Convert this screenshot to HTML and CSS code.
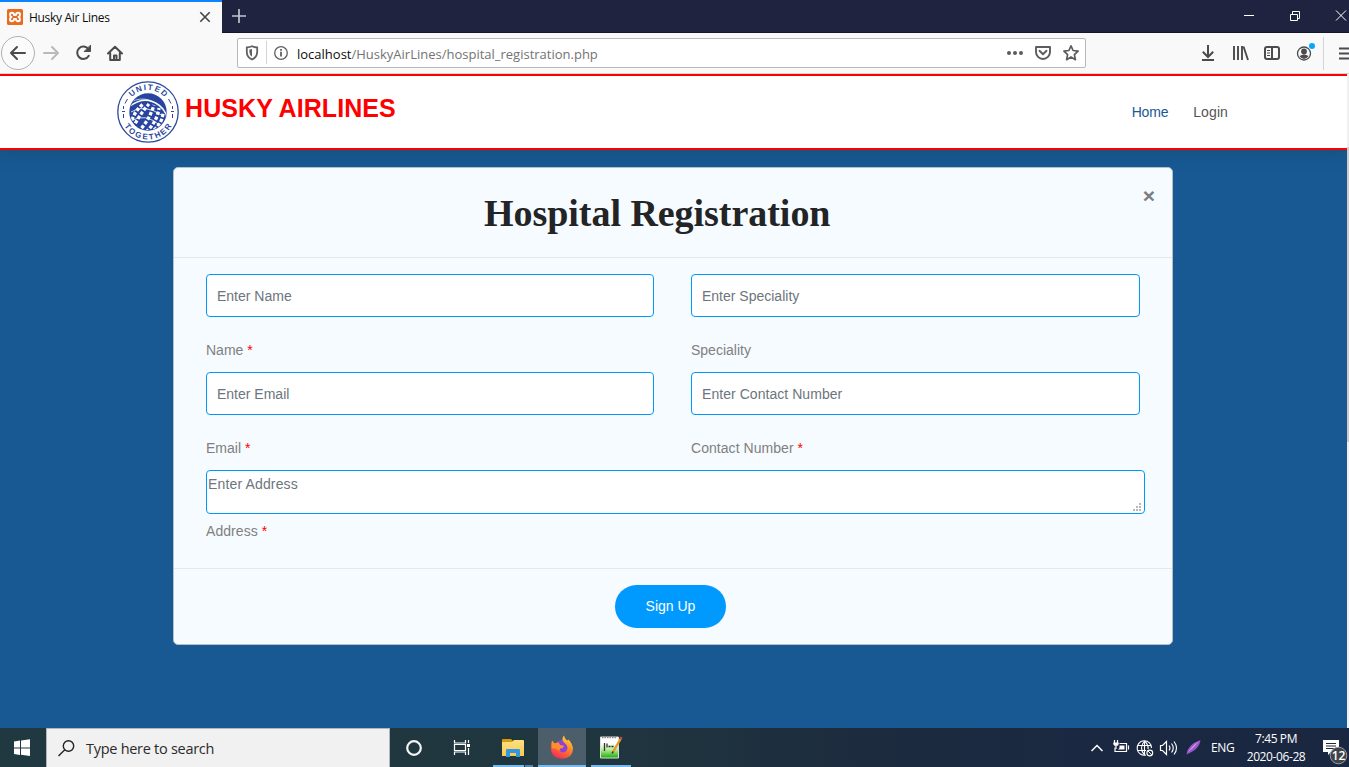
FILE: index.html
```
<!DOCTYPE html>
<html lang="en">
<head>
<meta charset="utf-8">
<title>Husky Air Lines</title>
<link rel="stylesheet" href="styles.css">
</head>
<body>
<div class="screen">
  <div class="tabbar">
    <div class="tab">
      <svg class="favicon" width="16" height="16" viewBox="0 0 16 16"><rect width="16" height="16" rx="1.500" fill="#e96c1e"/><g fill="none" stroke="#fff" stroke-width="1.900" stroke-linecap="round" stroke-linejoin="round"><path d="M4.500 8Q3 7.500 3 5.700 3 3.800 4.800 3.800 7 3.800 7 6h2Q9 3.800 11.200 3.800 13 3.800 13 5.700 13 7.500 11.500 8 13 8.500 13 10.300 13 12.200 11.200 12.200 9 12.200 9 10H7Q7 12.200 4.800 12.200 3 12.200 3 10.300 3 8.500 4.500 8z"/></g></svg>
      <span class="tab-title">Husky Air Lines</span>
      <svg class="tab-close" width="12" height="12" viewBox="0 0 12 12"><path d="M1.300 1.300l9.400 9.400M10.700 1.300l-9.400 9.400" stroke="#444" stroke-width="1.600"/></svg>
    </div>
    <svg class="newtab" width="14" height="14" viewBox="0 0 14 14"><path d="M7 0v14M0 7h14" stroke="#c4c4cd" stroke-width="1.700"/></svg>
    <svg class="winctl" width="104" height="12" viewBox="0 0 104 12"><g fill="none" stroke="#fff"><path d="M0 5.500h10M46.500 4.500h7v6h-7zM48.500 4.500v-3h7v7h-2M92 .5l10 10M102 .5l-10 10"/></g></svg>
  </div>

  <div class="toolbar">
    <svg class="navicons" width="130" height="40" viewBox="0 0 130 40"><g fill="none" stroke="#4b4b4d" stroke-width="2" stroke-linecap="round" stroke-linejoin="round"><circle cx="18" cy="20" r="16.500" fill="#fbfbfb" stroke="#b1b1b3" stroke-width="1"/><path d="M25 20H11M17 14l-6 6 6 6"/><path d="M44 20h14M52 14l6 6-6 6" stroke="#b9b9bb"/><path d="M88.500 16.200a6.200 6.200 0 1 0 .3 6.600"/><path d="M90.500 12.500v6h-6z" fill="#4b4b4d" stroke-width="1"/><path d="M108 20.500l7-6.800 7 6.800M110.200 20v7h9.600v-7"/><path d="M114 27v-4.500h2.500V27"/></g></svg>
    <div class="urlbar">
      <svg width="50" height="28" viewBox="0 0 50 28"><path d="M8.800 8.500q3.200-.2 5.200-1.200 2 1 5.200 1.200v4.500q0 5-5.200 7.500-5.200-2.500-5.200-7.500z" fill="none" stroke="#606062" stroke-width="1.800"/><path d="M14 10v7.800q-2.500-1.500-2.600-4.800v-2.400z" fill="#606062"/><path d="M28.500 2v23" stroke="#d5d5d7"/><circle cx="43" cy="14" r="6.300" fill="none" stroke="#606062" stroke-width="1.300"/><path d="M43 12.800v4.700M43 10v1.800" stroke="#606062" stroke-width="1.800"/></svg>
      <span class="url"><b>localhost</b>/HuskyAirLines/hospital_registration.php</span>
      <svg width="80" height="28" viewBox="0 0 80 28"><g fill="none" stroke="#5c5c5e" stroke-width="1.900" stroke-linejoin="round"><path d="M31 8h14v5a7 7 0 0 1-14 0z"/><path d="M34.500 11.800l3.500 3.400 3.500-3.400" stroke-linecap="round"/><path d="M66 6.800l2.100 4.700 5 .6-3.700 3.500 1 5.100-4.400-2.600-4.400 2.600 1-5.100-3.700-3.500 5-.6z" stroke-width="1.700"/></g><g fill="#5c5c5e"><circle cx="4" cy="14" r="2"/><circle cx="10" cy="14" r="2"/><circle cx="16" cy="14" r="2"/></g></svg>
    </div>
    <svg class="tools" width="149" height="40" viewBox="0 0 149 40"><g fill="none" stroke="#4b4b4d" stroke-width="2"><path d="M8 12v12M2.800 18.800L8 24l5.200-5.200M2 27h12"/><path d="M34 13v14M38 13v14M42 13v14M43.500 13.500l4.500 13.500" stroke-width="1.900"/><rect x="65" y="14" width="14" height="12" rx="2"/><path d="M72 14v12"/><path d="M67 17.500h3M67 20h3M67 22.500h3" stroke-width="1"/><circle cx="104" cy="20.500" r="6.500" stroke-width="1.300"/><path d="M123.500 4v33" stroke="#d4d4d6" stroke-width="1"/><path d="M139 15.500h10M139 20.500h10M139 25.500h10"/></g><circle cx="104" cy="18.500" r="2.900" fill="#4b4b4d"/><path d="M99.500 23q4.500-3.200 9 0-1.800 3-4.500 3t-4.500-3z" fill="#4b4b4d"/><circle cx="112" cy="13" r="3" fill="#00a9ff"/></svg>
  </div>

  <div class="page">
    <div class="content">
      <header class="site-header">
        <svg class="logo" width="62" height="64" viewBox="0 0 62 64">
          <defs><path id="arc-top" d="M9 32a22 22 0 0 1 44 0"/><path id="arc-bottom" d="M3.500 32a27.500 27.500 0 0 0 55 0"/><clipPath id="globe"><circle cx="31" cy="32" r="18"/></clipPath></defs>
          <circle cx="31" cy="32" r="30.200" fill="#fff" stroke="#2b489d" stroke-width="1.300"/>
          <circle cx="31" cy="32" r="18.700" fill="#2644a0"/>
          <g clip-path="url(#globe)" fill="none" stroke="#fff">
            <path d="M13 26Q28 15 42 25 50 31 50 41" stroke-width="1.400"/>
            <path d="M14 22Q33 12 50 35" stroke-width=".7"/>
            <g stroke-width="3.300" stroke-dasharray="3.400 1.800"><path d="M15 40Q18 31 26 24"/><path d="M16 48Q22 35 32 24"/><path d="M21 52Q32 41 37 25"/><path d="M29 52Q40 42 42 28"/><path d="M37 50Q46 42 46 32"/></g>
            <path d="M14 32Q27 23 46 36M14 41Q28 32 44 46" stroke-width=".8"/>
          </g>
          <g class="logo-text"><text class="upper"><textPath href="#arc-top" startOffset="51%" text-anchor="middle">UNITED</textPath></text><text><textPath href="#arc-bottom" startOffset="51%" text-anchor="middle">TOGETHER</textPath></text></g>
          <g stroke="#2b489d" stroke-width="1" fill="none"><path d="M10.500 19l-2.500 4.500M6.500 26v3M6.500 34v4M51.500 19l2.500 4.500M55.500 26v3M55.500 34v4M5 31.500h3M54 31.500h3"/></g>
        </svg>
        <div class="brand">HUSKY AIRLINES</div>
        <nav class="nav"><a class="active">Home</a><a>Login</a></nav>
      </header>
      <main class="main">
        <form class="modal">
          <div class="modal-header"><h1>Hospital Registration</h1><span class="close">×</span></div>
          <div class="modal-body">
            <div class="grid">
              <div class="field"><input type="text" placeholder="Enter Name"><label>Name <i>*</i></label></div>
              <div class="field"><input type="text" placeholder="Enter Speciality"><label>Speciality</label></div>
              <div class="field"><input type="text" placeholder="Enter Email"><label>Email <i>*</i></label></div>
              <div class="field"><input class="wide" type="text" placeholder="Enter Contact Number"><label class="wide">Contact Number <i>*</i></label></div>
            </div>
            <div class="address">
              <div class="area"><textarea placeholder="Enter Address"></textarea><svg class="grip" width="8" height="8" viewBox="0 0 8 8"><path d="M6 0h2v2H6zM3 3h2v2H3zM6 3h2v2H6zM0 6h2v2H0zM3 6h2v2H3zM6 6h2v2H6z" fill="#b9b9bb"/></svg></div>
              <label>Address <i>*</i></label>
            </div>
          </div>
          <div class="modal-footer"><button type="button">Sign Up</button></div>
        </form>
      </main>
    </div>
    <div class="scrollbar"><div class="thumb"></div></div>
  </div>

  <div class="taskbar">
    <svg width="46" height="39" viewBox="0 0 46 39"><path d="M14 13.500l6-.9v6.900h-6zM21 12.500l9-1.200v8.200h-9zM14 20.500h6V27l-6-.9zM21 20.500h9V28l-9-1.200z" fill="#fff"/></svg>
    <div class="search"><svg width="18" height="18" viewBox="0 0 18 18"><circle cx="10.500" cy="6" r="5.200" fill="none" stroke="#222" stroke-width="1.400"/><path d="M6.800 9.800L.5 16" stroke="#222" stroke-width="1.400"/></svg><span>Type here to search</span></div>
    <svg class="apps" width="242" height="39" viewBox="0 0 242 39">
      <defs><linearGradient id="folder" x2="0" y2="1"><stop stop-color="#ffe083"/><stop offset="1" stop-color="#fac84c"/></linearGradient><linearGradient id="fox" x1=".8" x2=".3" y2="1"><stop stop-color="#ffe03f"/><stop offset=".45" stop-color="#ff8a24"/><stop offset="1" stop-color="#f5285b"/></linearGradient><linearGradient id="note" x2="0" y2="1"><stop offset=".3" stop-color="#fff"/><stop offset=".6" stop-color="#b8eb96"/><stop offset="1" stop-color="#18ae08"/></linearGradient></defs>
      <circle cx="24" cy="20" r="6.800" fill="none" stroke="#f3f5f5" stroke-width="2.200"/>
      <g fill="none" stroke="#fff" stroke-width="1.200"><path d="M64.500 12v3h11v-3M64.500 27v-3h11v3M64.500 16.500h11v6h-11zM78.500 12v3M78.500 20v7"/></g><rect x="77" y="16" width="3" height="3" fill="#fff"/>
      <path d="M112 12q0-1 1-1h8l2 2h10q1 0 1 1v14h-22z" fill="#d99a13"/><path d="M112 14h10l2-2h9q1 0 1 1v15h-22z" fill="url(#folder)"/><path d="M116 29v-7q0-1 1-1h12q1 0 1 1v7h-4v-4h-6v4z" fill="#3097e2"/>
      <rect x="103" y="37" width="31" height="2" fill="#76b9ed"/><rect x="135" y="37" width="8" height="2" fill="#5887a8"/>
      <rect x="148" width="48" height="39" fill="#4b5e69"/><rect x="148" y="37" width="48" height="2" fill="#76b9ed"/>
      <circle cx="172" cy="20" r="8" fill="#8b42dc"/>
      <path d="M162 12.500l2.500 3 4-1 1.500 2.500 4 1q-1 2.500-4 2.500-.5 3.500 2.500 4 4.500 0 5-5-.5-3-3-4.500-4-3.500-.5-7.500 1 4 3.500 5l1-1q4.500 5 4.500 9.500-.5 9.500-11 9.800-10.500-.3-11.200-10.300 0-5 1.200-8z" fill="url(#fox)"/>
      <path d="M162 12.500l2.500 3 4-1 1.500 2.500 4 1q-1 2.500-4 2.500l-1 2q-4-3-7-2z" fill="#ff8f2c"/>
      <rect x="201" y="37" width="40" height="2" fill="#76b9ed"/>
      <path d="M210.500 9h18v21h-18z" fill="url(#note)" stroke="#ddd"/><path d="M212 9.500h14" stroke="#888" stroke-width="1.500" stroke-dasharray="1.500 1"/><path d="M214.500 15v8M217 15.500v4" stroke="#333" stroke-width="1.300"/><path d="M218.500 18.500h6" stroke="#222" stroke-width="1.500" stroke-dasharray="2 1"/><path d="M223 24l7.500-13" stroke="#e59b2a" stroke-width="2.400"/><path d="M230.500 11l1-2" stroke="#b64d55" stroke-width="2.600"/><path d="M222.200 25.500l.8-2" stroke="#333" stroke-width="1.500"/>
    </svg>
    <div class="tray">
      <svg width="115" height="39" viewBox="0 0 115 39"><g fill="none" stroke="#fff" stroke-width="1.200"><path d="M1.500 23l5.500-5.500 5.500 5.500" stroke-width="1.500"/><path d="M29.500 15.500h7v8h-11.500v-4M38.500 17.500v4"/><path d="M24.500 12v3M27.500 12v3M26 18v3"/><g stroke-width="1.100"><path d="M61.500 20a7.200 7.200 0 1 0-5.500 7"/><path d="M48 17.500h13M48 22.500h8M54.500 13q-6 7 0 14M54.500 13q4 3.500 3.600 8M54.500 13v14"/></g><circle cx="59.800" cy="25" r="2.900" stroke-width="1.100"/><path d="M58 23l3.800 4" stroke-width="1"/><path d="M70.500 17.500h2l4-4v13l-4-4h-2z"/><path d="M79 17.500q2 2.500 0 5M81.500 15.500q3.500 4.500 0 9M84 13.500q5 6.500 0 13" stroke-width="1.100"/></g><path d="M23.300 14.500h5.400v1.500q0 2-2.700 2t-2.700-2zM29.500 17.500h5v4h-6.500l1.500-1.500z" fill="#fff"/><path d="M96.500 26.500q1-10 14-14.500-1 8-9 12z" fill="#9b58cb"/><path d="M96 27q4-7 13-14-5 7-11 11z" fill="#d3a4ed"/></svg>
      <span class="lang">ENG</span>
      <div class="clock"><span>7:45 PM</span><span>2020-06-28</span></div>
      <svg class="notice" width="27" height="39" viewBox="0 0 27 39"><path d="M1 12h16v12h-8l-3 3v-3H1z" fill="#fff"/><path d="M4 15.500h10M4 18h10M4 20.500h10" stroke="#1b2940"/><circle cx="16.500" cy="27.500" r="8.300" fill="#404448" stroke="#9b9da2"/><text x="16.500" y="31.500" text-anchor="middle">12</text></svg>
    </div>
  </div>
</div>
</body>
</html>
```
FILE: styles.css
```
* { box-sizing: border-box; }
body { margin: 0; overflow: hidden; font: 14px/20px "Liberation Sans", Arial, sans-serif; }
svg { display: block; flex: none; }
.screen { width: 1349px; height: 767px; display: flex; flex-direction: column; }

.tabbar { height: 33px; flex: none; display: flex; align-items: center; background: #202340; border-bottom: 1px solid #15162e; }
.tab { width: 222px; height: 33px; align-self: flex-start; display: flex; align-items: center; padding: 0 11px 0 7px; background: #f9f9fa; border-top: 2px solid #0a84ff; }
.favicon { margin-top: -2px; }
.tab-close { margin-top: -2px; }
.tab-title { flex: 1; margin-left: 6px; font: 12px/16px "Open Sans", sans-serif; letter-spacing: -.3px; color: #0c0c0d; white-space: nowrap; }
.newtab { margin-left: 10px; }
.winctl { margin-left: auto; margin-right: 1px; }

.toolbar { height: 41px; flex: none; display: flex; background: #f9f9fa; border-bottom: 1px solid #d4d4d6; }
.urlbar { width: 849px; height: 30px; margin: 5px 0 0 107px; display: flex; align-items: center; background: #fff; border: 1px solid #b9b9bb; border-radius: 2px; }
.url { flex: 1; margin: 2px 0 0 9px; font: 13px/20px "Open Sans", sans-serif; color: #737373; white-space: nowrap; }
.url b { font-weight: 400; color: #0c0c0d; }
.tools { margin-left: auto; }

.page { height: 654px; flex: none; display: flex; overflow: hidden; }
.content { flex: 1; display: flex; flex-direction: column; background: #185893; }
.scrollbar { width: 2px; background: #f0f0f0; padding-top: 73px; }
.thumb { height: 295px; background: #cdcdcd; }
.site-header { height: 76px; flex: none; display: flex; padding-left: 117px; background: #fff; border-top: 2px solid #f00; border-bottom: 2px solid #f00; box-shadow: 0 2px 12px rgba(24, 80, 110, .8); }
.logo { margin-top: 4px; }
.logo-text { font: bold 8px "Liberation Sans", Arial, sans-serif; fill: #2b489d; letter-spacing: 1.800px; }
.logo-text .upper { letter-spacing: 1.400px; }
.brand { margin: 16px 0 0 6px; font-size: 25px; line-height: 32px; font-weight: 700; letter-spacing: .08px; color: #f00; white-space: nowrap; }
.nav { margin: 26px 119px 0 auto; display: flex; gap: 25px; color: #555; }
.nav a { letter-spacing: -.2px; }
.nav a:last-child { letter-spacing: .1px; }
.nav .active { color: #185893; }

.main { padding: 17px 0 0 173px; }
.modal { width: 1000px; height: 478px; display: flex; flex-direction: column; background: #f6fbff; border: 1px solid #b7c0c7; border-radius: 5px; }
.modal-header { height: 90px; flex: none; display: flex; justify-content: space-between; padding: 16px 17px 0 310px; border-bottom: 1px solid #e3e8eb; }
h1 { margin: 5px 0 0; font: bold 38px/48px "Liberation Serif", serif; letter-spacing: -.04px; color: #222426; white-space: nowrap; }
.close { font-size: 21px; line-height: 24px; font-weight: 700; color: #7b7d7f; }
.modal-body { height: 311px; padding: 16px 27px 0 32px; border-bottom: 1px solid #e3e8eb; }
.grid { display: grid; grid-template-columns: 448px 449px; column-gap: 37px; }
.field { height: 98px; display: flex; flex-direction: column; }
input { width: 100%; height: 43px; padding: 0 10px; border: 1px solid #0099f7; border-radius: 4px; background: #fff; font: 14px "Liberation Sans", Arial, sans-serif; }
.wide { letter-spacing: .05px; }
input::placeholder, textarea::placeholder { color: #6c757d; opacity: 1; }
label { color: #808080; }
label i { color: #f00; font-style: normal; }
.field label { margin-top: 23px; }
.area { position: relative; height: 44px; }
textarea { display: block; width: 939px; height: 44px; padding: 3px 1px; resize: none; border: 1px solid #0099f7; border-radius: 4px; background: #fff; font: 14px/20px "Liberation Sans", Arial, sans-serif; letter-spacing: .15px; }
.grip { position: absolute; right: 4px; bottom: 3px; }
.address label { display: block; margin-top: 7px; letter-spacing: .07px; }
.modal-footer { padding: 16px 0 0 441px; }
button { display: block; width: 111px; height: 43px; padding: 0 0 2px; border: 0; border-radius: 22px; background: #009aff; color: #fff; font: 14px "Liberation Sans", Arial, sans-serif; }

.taskbar { height: 39px; flex: none; display: flex; background: linear-gradient(90deg, #20383f, #20363f 45%, #1c2b3e 65%, #1a2841 80%, #1a2741); }
.search { width: 344px; display: flex; align-items: center; gap: 10px; padding: 2px 0 0 11px; background: #f1f1f1; border: 1px solid #b3b6b8; border-bottom: 0; font: 14.500px/20px "Open Sans", sans-serif; letter-spacing: -.28px; color: #2b2b2b; }
.tray { margin-left: auto; display: flex; align-items: center; color: #fff; font: 12px/18px "Open Sans", sans-serif; }
.tray > svg:first-child { margin-right: 2px; }
.lang { width: 35px; padding-left: 4px; letter-spacing: -.3px; }
.clock { width: 80px; padding-right: 12px; display: flex; flex-direction: column; align-items: center; margin-top: 1px; letter-spacing: -.4px; white-space: nowrap; }
.notice text { font: 600 12px "Open Sans", sans-serif; fill: #fff; }
```
